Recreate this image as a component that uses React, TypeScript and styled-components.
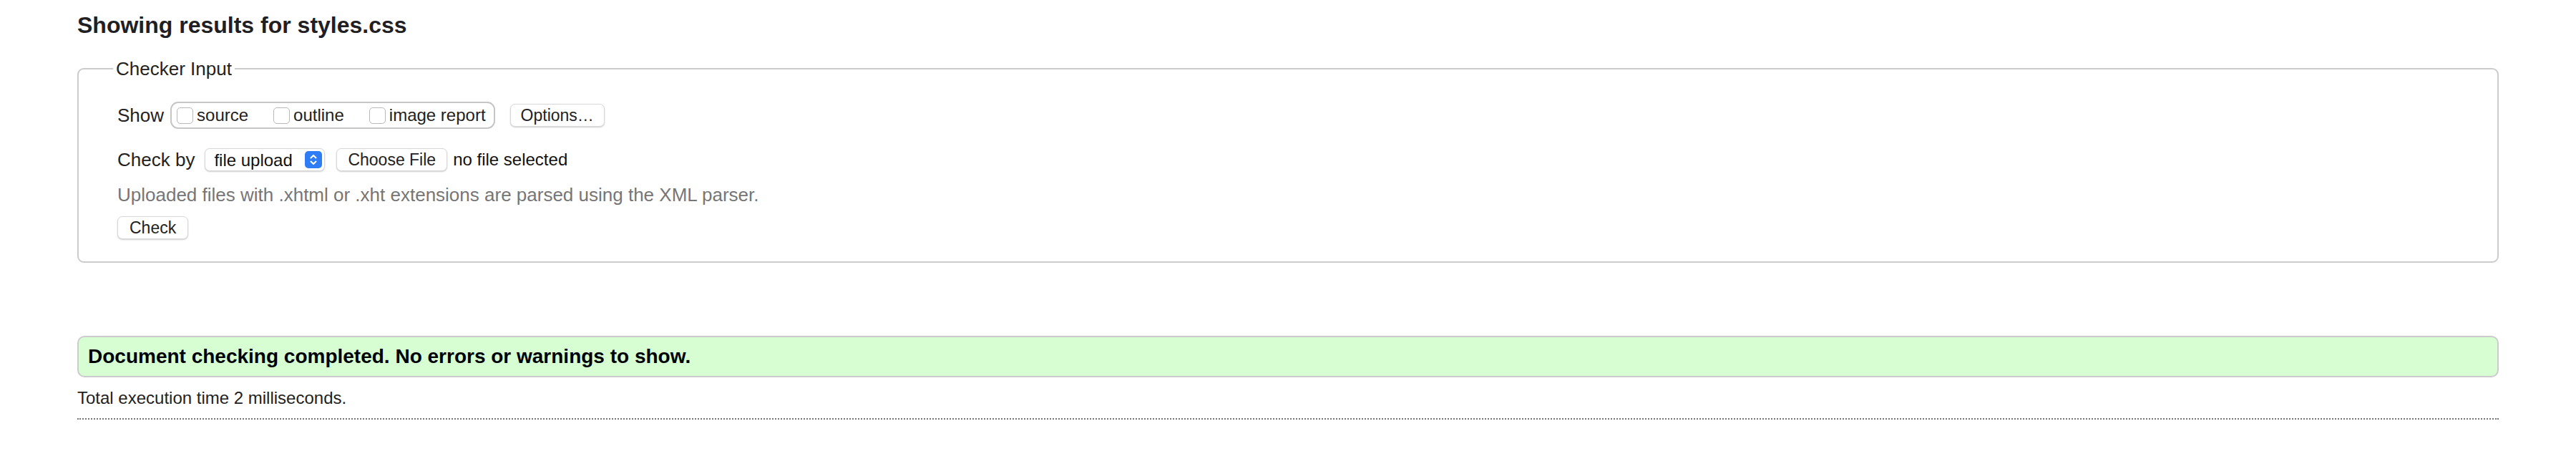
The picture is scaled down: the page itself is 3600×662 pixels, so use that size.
import React from "react";
import styled, { createGlobalStyle } from "styled-components";

const GlobalStyle = createGlobalStyle`
  html, body { margin: 0; padding: 0; background: #ffffff; }
  body { font-family: "Liberation Sans", Arial, Helvetica, sans-serif; color: #222; }
`;

const Page = styled.main`
  padding: 17px 108px 40px;
`;

const Heading = styled.h2`
  margin: 0;
  font-size: 32px;
  line-height: 36px;
  font-weight: 700;
  color: #1f2024;
`;

const InputPanel = styled.fieldset`
  margin: 28px 0 0;
  padding: 31px 0 31px 54px;
  border: 2px solid #cccccc;
  border-radius: 9px;
  min-inline-size: 0;
`;

const PanelLegend = styled.legend`
  margin-left: -6px;
  padding: 0 4px;
  font-size: 26px;
  line-height: 30px;
  color: #222;
`;

const Row = styled.div<{ $gapTop?: number }>`
  display: flex;
  align-items: center;
  margin-top: ${(p) => p.$gapTop ?? 0}px;
`;

const RowLabel = styled.span<{ $space: number }>`
  font-size: 26px;
  line-height: 30px;
  color: #222;
  margin-right: ${(p) => p.$space}px;
`;

const OptionGroup = styled.div`
  display: flex;
  align-items: center;
  gap: 35px;
  height: 34px;
  padding: 0 11px 0 7px;
  border: 2px solid #c6c6c6;
  border-radius: 11px;
  margin-right: 21px;
`;

const OptionLabel = styled.label`
  display: flex;
  align-items: center;
  gap: 5px;
  font-size: 24px;
  line-height: 28px;
  color: #222;
  cursor: pointer;
`;

const Box = styled.input.attrs({ type: "checkbox" })`
  appearance: none;
  margin: 0;
  width: 23px;
  height: 23px;
  border: 1.5px solid #b9b9b9;
  border-radius: 5px;
  background: #fff;
  box-sizing: border-box;
`;

const Button = styled.button<{ $pad?: number }>`
  height: 32px;
  padding: 0 ${(p) => p.$pad ?? 15}px;
  margin: 0;
  font-family: "Liberation Sans", Arial, Helvetica, sans-serif;
  font-size: 23px;
  line-height: 30px;
  color: #222;
  background: #ffffff;
  border: 1px solid #d8d8d8;
  border-radius: 7px;
  box-shadow: 0 1px 2px rgba(0, 0, 0, 0.2);
  cursor: pointer;
`;

const SelectWrap = styled.div`
  position: relative;
  width: 168px;
  height: 32px;
  margin-right: 16px;
`;

const Select = styled.select`
  appearance: none;
  width: 100%;
  height: 100%;
  margin: 0;
  padding: 0 30px 0 12px;
  font-family: "Liberation Sans", Arial, Helvetica, sans-serif;
  font-size: 24px;
  color: #111;
  background: #fff;
  border: 1px solid #d8d8d8;
  border-radius: 7px;
  box-shadow: 0 1px 2px rgba(0, 0, 0, 0.2);
`;

const Stepper = styled.span`
  position: absolute;
  top: 4px;
  right: 4px;
  width: 24px;
  height: 24px;
  border-radius: 5px;
  background: #2f7df6;
  display: flex;
  align-items: center;
  justify-content: center;
  pointer-events: none;
`;

const FileName = styled.span`
  margin-left: 8px;
  font-size: 24px;
  line-height: 28px;
  color: #111;
`;

const Hint = styled.p`
  margin: 18px 0 0;
  font-size: 26px;
  line-height: 30px;
  color: #767676;
`;

const CheckRow = styled.div`
  margin-top: 15px;
`;

const Success = styled.div`
  margin-top: 102px;
  padding: 11px 13px;
  border: 2px solid #cccccc;
  border-radius: 10px;
  background: #d7fdd2;
  font-size: 28px;
  line-height: 32px;
  font-weight: 700;
  color: #000;
`;

const Timing = styled.p`
  margin: 15px 0 0;
  font-size: 24px;
  line-height: 28px;
  color: #222;
`;

const Rule = styled.hr`
  margin: 14px 0 0;
  border: 0;
  border-top: 2px dotted #777;
  height: 0;
`;

export default function App() {
  return (
    <>
      <GlobalStyle />
      <Page>
        <Heading>Showing results for styles.css</Heading>
        <InputPanel>
          <PanelLegend>Checker Input</PanelLegend>
          <Row>
            <RowLabel $space={9}>Show</RowLabel>
            <OptionGroup>
              <OptionLabel>
                <Box />
                source
              </OptionLabel>
              <OptionLabel>
                <Box />
                outline
              </OptionLabel>
              <OptionLabel>
                <Box />
                image report
              </OptionLabel>
            </OptionGroup>
            <Button type="button" $pad={14}>Options…</Button>
          </Row>
          <Row $gapTop={27}>
            <RowLabel $space={14}>Check by</RowLabel>
            <SelectWrap>
              <Select defaultValue="upload">
                <option value="address">address</option>
                <option value="upload">file upload</option>
                <option value="textarea">text input</option>
              </Select>
              <Stepper>
                <svg width="12" height="18" viewBox="0 0 12 18" fill="none">
                  <path d="M2.5 6.5 6 3l3.5 3.5" stroke="#fff" strokeWidth="2" strokeLinecap="round" strokeLinejoin="round" />
                  <path d="M2.5 11.5 6 15l3.5-3.5" stroke="#fff" strokeWidth="2" strokeLinecap="round" strokeLinejoin="round" />
                </svg>
              </Stepper>
            </SelectWrap>
            <Button type="button">Choose File</Button>
            <FileName>no file selected</FileName>
          </Row>
          <Hint>Uploaded files with .xhtml or .xht extensions are parsed using the XML parser.</Hint>
          <CheckRow>
            <Button type="submit" $pad={16}>Check</Button>
          </CheckRow>
        </InputPanel>
        <Success>Document checking completed. No errors or warnings to show.</Success>
        <Timing>Total execution time 2 milliseconds.</Timing>
        <Rule />
      </Page>
    </>
  );
}
